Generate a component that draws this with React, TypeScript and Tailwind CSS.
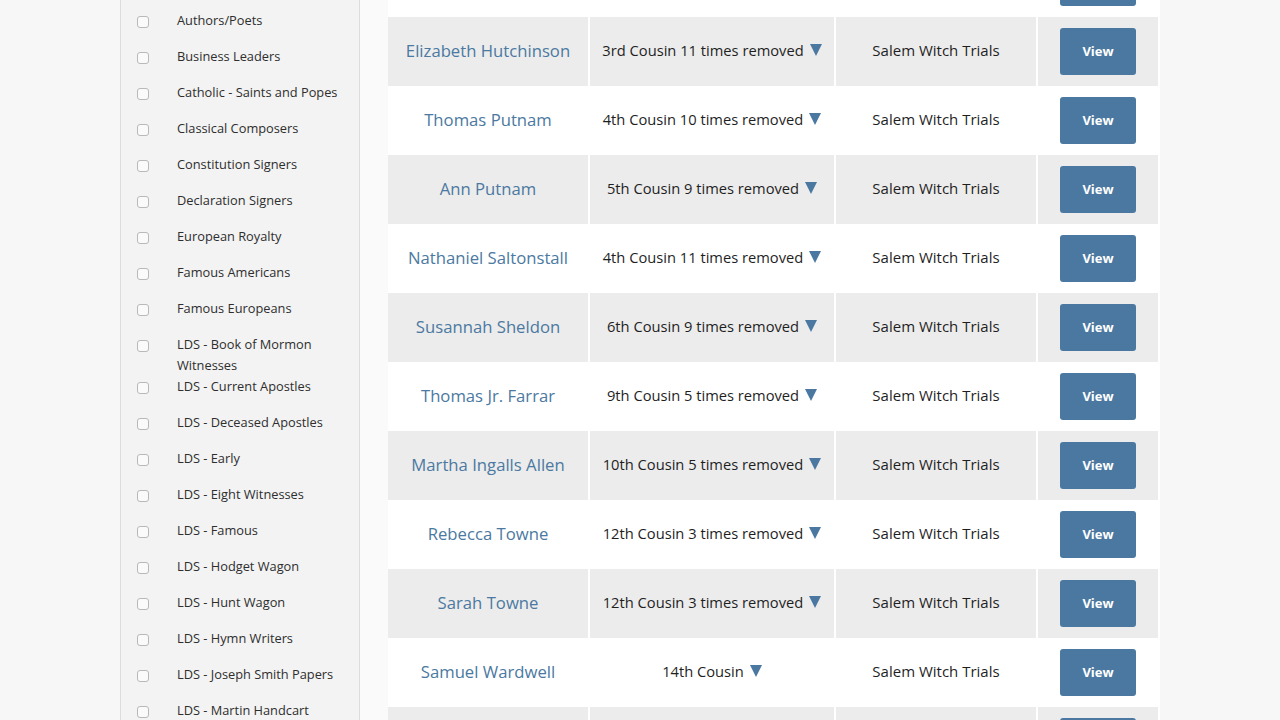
import React from "react";

const sidebarItems: { label: React.ReactNode; tall?: boolean }[] = [
  { label: "Authors/Poets" },
  { label: "Business Leaders" },
  { label: "Catholic - Saints and Popes" },
  { label: "Classical Composers" },
  { label: "Constitution Signers" },
  { label: "Declaration Signers" },
  { label: "European Royalty" },
  { label: "Famous Americans" },
  { label: "Famous Europeans" },
  { label: "LDS - Book of Mormon Witnesses", tall: true },
  { label: "LDS - Current Apostles" },
  { label: "LDS - Deceased Apostles" },
  { label: "LDS - Early" },
  { label: "LDS - Eight Witnesses" },
  { label: "LDS - Famous" },
  { label: "LDS - Hodget Wagon" },
  { label: "LDS - Hunt Wagon" },
  { label: "LDS - Hymn Writers" },
  { label: "LDS - Joseph Smith Papers" },
  { label: "LDS - Martin Handcart" },
];

const rows: { name: string; rel: string }[] = [
  { name: "Mary Easty", rel: "3rd Cousin 11 times removed" },
  { name: "Elizabeth Hutchinson", rel: "3rd Cousin 11 times removed" },
  { name: "Thomas Putnam", rel: "4th Cousin 10 times removed" },
  { name: "Ann Putnam", rel: "5th Cousin 9 times removed" },
  { name: "Nathaniel Saltonstall", rel: "4th Cousin 11 times removed" },
  { name: "Susannah Sheldon", rel: "6th Cousin 9 times removed" },
  { name: "Thomas Jr. Farrar", rel: "9th Cousin 5 times removed" },
  { name: "Martha Ingalls Allen", rel: "10th Cousin 5 times removed" },
  { name: "Rebecca Towne", rel: "12th Cousin 3 times removed" },
  { name: "Sarah Towne", rel: "12th Cousin 3 times removed" },
  { name: "Samuel Wardwell", rel: "14th Cousin" },
  { name: "John Willard", rel: "14th Cousin 2 times removed" },
];

function Triangle() {
  return (
    <svg width="12" height="12" viewBox="0 0 12 12" className="inline-block ml-[6px] -mt-[2px] align-middle shrink-0">
      <polygon points="0,0 12,0 6,12" fill="#4b78a0" />
    </svg>
  );
}

export default function App() {
  return (
    <div
      className="w-[1280px] h-[720px] overflow-hidden bg-[#f7f7f7] flex"
      style={{ fontFamily: '"Open Sans", "Noto Sans", sans-serif' }}
    >
      <div className="w-[120px] shrink-0" />
      <div className="w-[240px] shrink-0 bg-[#f3f3f3] border-x border-[#dcdcdc] pt-[10px] pl-[16px]">
        {sidebarItems.map((it, i) => (
          <div key={i} className={`flex items-start ${it.tall ? "h-[42px]" : "h-[36px]"}`}>
            <span className="mt-[6px] w-[12px] h-[12px] shrink-0 rounded-[3px] border border-[#b8b8b8] bg-[#fafafa]" />
            <span className="ml-[28px] w-[176px] text-[12.8px] leading-[21px] text-[#2e2e2e]">{it.label}</span>
          </div>
        ))}
      </div>
      <div className="w-[28px] shrink-0 bg-[#fafafa]" />
      <div className="w-[772px] shrink-0 bg-white -mt-[52px] pr-[2px] self-start">
        {rows.map((r, i) => {
          const gray = i % 2 === 1;
          const cell = gray ? "bg-[#ececec]" : "bg-white";
          return (
            <div key={i} className="grid grid-cols-[200px_244px_200px_120px] gap-x-[2px] h-[69px]">
              <div className={`${cell} flex items-center justify-center pb-[2px] text-[16.7px] text-[#4b79a1]`}>{r.name}</div>
              <div className={`${cell} flex items-center justify-center pb-[2px] text-[14.7px] text-[#1f1f1f]`}>
                <span>{r.rel}</span>
                <Triangle />
              </div>
              <div className={`${cell} flex items-center justify-center pb-[2px] text-[15px] text-[#1f1f1f]`}>Salem Witch Trials</div>
              <div className={`${cell} flex items-center justify-center`}>
                <button className="w-[76px] h-[47px] rounded-[3px] bg-[#4b78a0] text-white text-[13px] font-bold">View</button>
              </div>
            </div>
          );
        })}
      </div>
      <div className="flex-1" />
    </div>
  );
}
